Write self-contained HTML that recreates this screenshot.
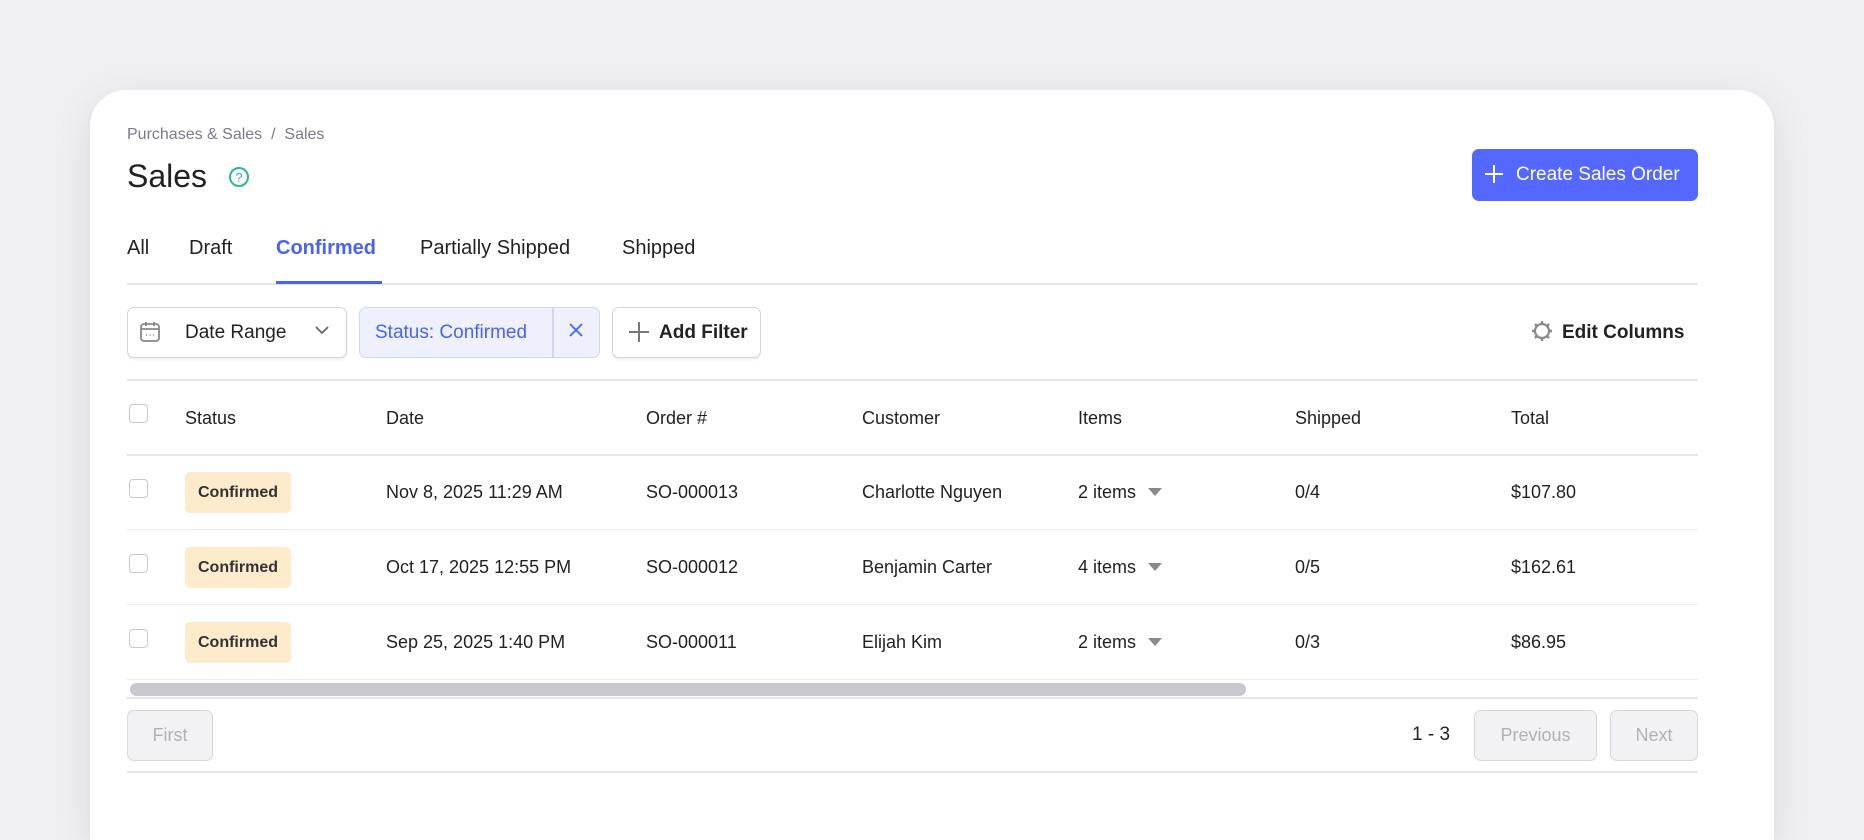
<!DOCTYPE html>
<html style="width:1864px;height:840px;overflow:hidden"><head><meta charset="utf-8"><style>
*{box-sizing:border-box;margin:0;padding:0}
body{width:1864px;height:840px;background:#f0f0f2;font-family:"Liberation Sans",sans-serif;color:#222;position:relative;overflow:hidden}
.card{position:absolute;left:90px;top:90px;width:1684px;height:750px;background:#fff;border-radius:36px 36px 0 0;box-shadow:0 10px 40px rgba(0,0,0,.10)}
.a{position:absolute;white-space:nowrap}
.t{font-size:18px;line-height:22px}
.line{position:absolute;left:127px;width:1571px;height:2px;background:#e6e6ea}
.btn{position:absolute;border:1.5px solid #d4d4da;border-radius:7px;background:#fff;box-shadow:0 2px 2px rgba(0,0,0,.06)}
.badge{position:absolute;left:185px;width:106px;height:41px;background:#fdebcc;border-radius:5px;font-size:16px;font-weight:bold;color:#333;text-align:center;line-height:41px}
.cb{position:absolute;left:129px;width:19px;height:19px;border:1.5px solid #c8c8ce;border-radius:4px;background:#fff}
.tri{display:inline-block;width:0;height:0;border-left:7px solid transparent;border-right:7px solid transparent;border-top:8px solid #888890;margin-left:12px;vertical-align:2px}
.dis{position:absolute;background:#f2f2f5;border:1.5px solid #d8d8de;border-radius:7px;color:#b0b0b8;font-size:18px;text-align:center;line-height:48px;height:51px;top:710px}
</style></head><body>
<div class="card"></div>
<div class="a" style="left:127px;top:126px;font-size:16px;color:#7a7a88">Purchases &amp; Sales &nbsp;/&nbsp; Sales</div>
<div class="a" style="left:127px;top:157px;font-size:32px;line-height:38px;font-weight:500;color:#222">Sales</div>
<svg class="a" style="left:228px;top:166px" width="22" height="22" viewBox="0 0 22 22"><circle cx="11" cy="11" r="9" fill="none" stroke="#2ab89a" stroke-width="2"/><text x="11" y="16" font-size="13" text-anchor="middle" fill="#2ab89a" font-family="Liberation Sans">?</text></svg>
<div class="a" style="left:1472px;top:149px;width:226px;height:52px;background:#5468ff;border-radius:7px;color:#fff;font-size:19px;line-height:52px;padding-left:44px">Create Sales Order</div>
<svg class="a" style="left:1483px;top:163px" width="22" height="22"><path d="M11 2v18M2 11h18" stroke="#fff" stroke-width="2"/></svg>
<div class="a" style="left:127px;top:236px;font-size:20px;line-height:24px;color:#222">All</div>
<div class="a" style="left:189px;top:236px;font-size:20px;line-height:24px;color:#222">Draft</div>
<div class="a" style="left:276px;top:236px;font-size:20px;line-height:24px;color:#4a62f5;font-weight:bold">Confirmed</div>
<div class="a" style="left:420px;top:236px;font-size:20px;line-height:24px;color:#222">Partially Shipped</div>
<div class="a" style="left:622px;top:236px;font-size:20px;line-height:24px;color:#222">Shipped</div>
<div class="line" style="top:283px"></div>
<div class="a" style="left:276px;top:281px;width:106px;height:3px;background:#4a62f5"></div>
<div class="btn" style="left:127px;top:307px;width:220px;height:51px"></div>
<svg class="a" style="left:139px;top:320px" width="22" height="24" viewBox="0 0 22 24"><rect x="2" y="4" width="18" height="17" rx="3" fill="none" stroke="#888" stroke-width="1.8"/><path d="M2 9h18M7 2v4M15 2v4" stroke="#888" stroke-width="1.8"/><path d="M7 15h1M10.5 15h1M14 15h1" stroke="#888" stroke-width="1.5"/></svg>
<div class="a t" style="left:185px;top:322px;font-size:19px">Date Range</div>
<svg class="a" style="left:314px;top:324px" width="16" height="12"><path d="M2 3l6 6 6-6" fill="none" stroke="#666" stroke-width="1.8"/></svg>
<div class="a" style="left:359px;top:307px;width:241px;height:51px;background:#eef0fd;border:1.5px solid #d4d6ee;border-radius:7px"></div>
<div class="a" style="left:552px;top:308px;width:1.5px;height:49px;background:#d4d6ee"></div>
<div class="a t" style="left:375px;top:322px;font-size:19px;color:#4a62f5">Status: Confirmed</div>
<svg class="a" style="left:568px;top:322px" width="16" height="16"><path d="M2 2l12 12M14 2L2 14" stroke="#4a62f5" stroke-width="1.8"/></svg>
<div class="btn" style="left:612px;top:307px;width:149px;height:51px"></div>
<svg class="a" style="left:627px;top:320px" width="24" height="24"><path d="M12 2v20M2 12h20" stroke="#777" stroke-width="2"/></svg>
<div class="a t" style="left:659px;top:322px;font-size:19px;font-weight:bold;color:#222">Add Filter</div>
<svg class="a" style="left:1531px;top:320px" width="22" height="22" viewBox="0 0 22 22"><circle cx="11" cy="11" r="7" fill="none" stroke="#888890" stroke-width="2.2"/><path d="M11 1v4M11 17v4M1 11h4M17 11h4M4 4l2.8 2.8M15.2 15.2L18 18M4 18l2.8-2.8M15.2 6.8L18 4" stroke="#888890" stroke-width="2.4"/><circle cx="11" cy="11" r="4.5" fill="#fff"/></svg>
<div class="a t" style="left:1562px;top:322px;font-size:19px;font-weight:bold;color:#222">Edit Columns</div>
<div class="line" style="top:379px"></div>
<div class="cb" style="top:404px"></div>
<div class="a t" style="left:185px;top:407px">Status</div>
<div class="a t" style="left:386px;top:407px">Date</div>
<div class="a t" style="left:646px;top:407px">Order #</div>
<div class="a t" style="left:862px;top:407px">Customer</div>
<div class="a t" style="left:1078px;top:407px">Items</div>
<div class="a t" style="left:1295px;top:407px">Shipped</div>
<div class="a t" style="left:1511px;top:407px">Total</div>
<div class="line" style="top:454px"></div>

<div class="cb" style="top:479px"></div><div class="badge" style="top:472px">Confirmed</div>
<div class="a t" style="left:386px;top:481px">Nov 8, 2025 11:29 AM</div>
<div class="a t" style="left:646px;top:481px">SO-000013</div>
<div class="a t" style="left:862px;top:481px">Charlotte Nguyen</div>
<div class="a t" style="left:1078px;top:481px">2 items<span class="tri"></span></div>
<div class="a t" style="left:1295px;top:481px">0/4</div>
<div class="a t" style="left:1511px;top:481px">$107.80</div>
<div class="line" style="top:529px;height:1px;background:#eeeef1"></div>

<div class="cb" style="top:554px"></div><div class="badge" style="top:547px">Confirmed</div>
<div class="a t" style="left:386px;top:556px">Oct 17, 2025 12:55 PM</div>
<div class="a t" style="left:646px;top:556px">SO-000012</div>
<div class="a t" style="left:862px;top:556px">Benjamin Carter</div>
<div class="a t" style="left:1078px;top:556px">4 items<span class="tri"></span></div>
<div class="a t" style="left:1295px;top:556px">0/5</div>
<div class="a t" style="left:1511px;top:556px">$162.61</div>
<div class="line" style="top:604px;height:1px;background:#eeeef1"></div>

<div class="cb" style="top:629px"></div><div class="badge" style="top:622px">Confirmed</div>
<div class="a t" style="left:386px;top:631px">Sep 25, 2025 1:40 PM</div>
<div class="a t" style="left:646px;top:631px">SO-000011</div>
<div class="a t" style="left:862px;top:631px">Elijah Kim</div>
<div class="a t" style="left:1078px;top:631px">2 items<span class="tri"></span></div>
<div class="a t" style="left:1295px;top:631px">0/3</div>
<div class="a t" style="left:1511px;top:631px">$86.95</div>
<div class="line" style="top:679px;height:1px;background:#eeeef1"></div>

<div class="a" style="left:130px;top:683px;width:1116px;height:13px;background:#c9c9d1;border-radius:7px"></div>
<div class="line" style="top:697px"></div>
<div class="dis" style="left:127px;width:86px">First</div>
<div class="a t" style="left:1412px;top:724px;font-size:19px">1 - 3</div>
<div class="dis" style="left:1474px;width:123px">Previous</div>
<div class="dis" style="left:1610px;width:88px">Next</div>
<div class="line" style="top:771px"></div>
</body></html>
